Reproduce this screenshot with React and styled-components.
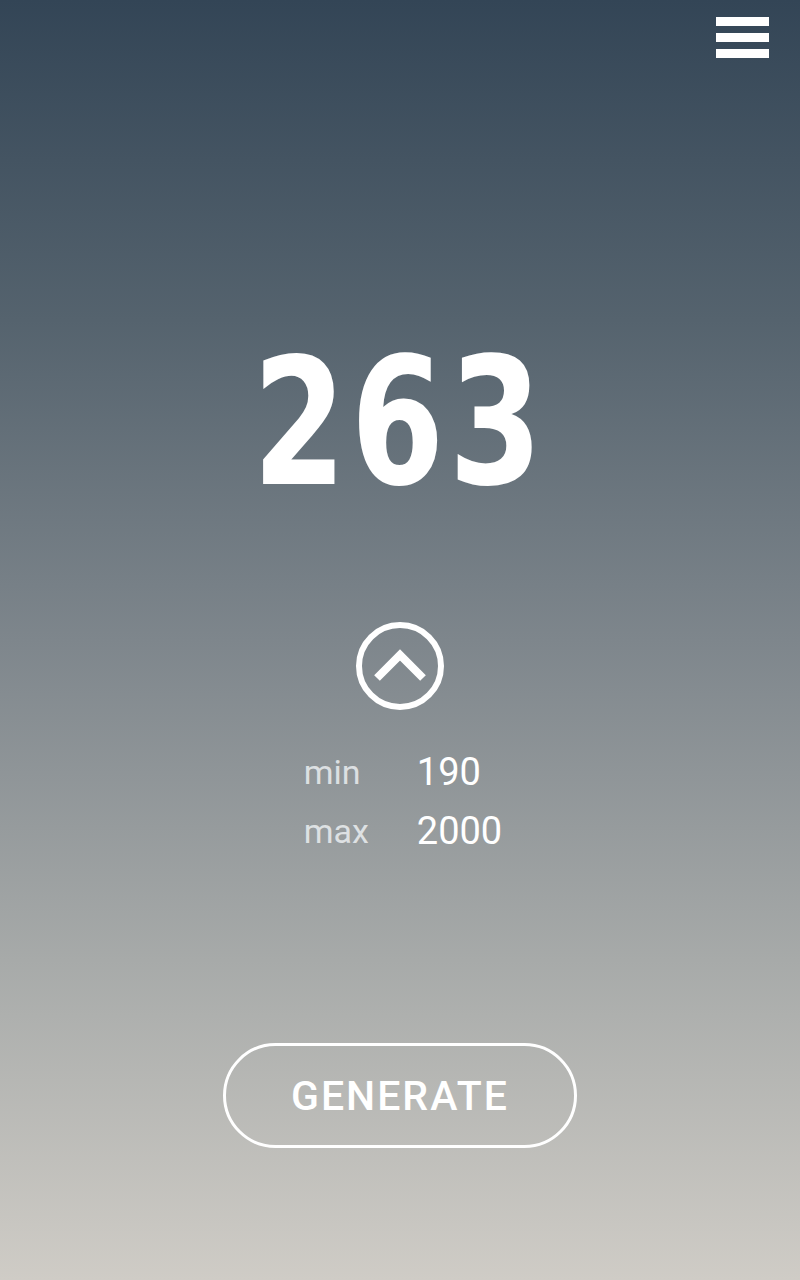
import React from "react";
import styled, { createGlobalStyle } from "styled-components";

const Global = createGlobalStyle`
  html, body { margin: 0; padding: 0; }
  body { font-family: Roboto, "Noto Sans", sans-serif; }
`;

const Screen = styled.div`
  width: 800px;
  height: 1280px;
  box-sizing: border-box;
  background: linear-gradient(180deg, #334556 0%, #55636e 25%, #7e868c 50%, #a7aaa9 75%, #cfccc6 100%);
  display: flex;
  flex-direction: column;
  align-items: center;
  overflow: hidden;
`;

const TopBar = styled.div`
  align-self: stretch;
  display: flex;
  justify-content: flex-end;
  padding: 17px 31px 0 0;
`;

const Menu = styled.button`
  display: flex;
  flex-direction: column;
  gap: 7px;
  width: 53px;
  padding: 0;
  background: none;
  border: none;
  cursor: pointer;
`;

const Bar = styled.span`
  display: block;
  height: 9px;
  background: #ffffff;
`;

const Number = styled.div`
  margin-top: 277px;
  font-family: "DejaVu Sans", sans-serif;
  font-weight: 700;
  font-size: 177px;
  line-height: 177px;
  height: 177px;
  color: #ffffff;
  letter-spacing: 6px;
  transform: scaleX(0.76);
`;

const ArrowButton = styled.button`
  margin-top: 109px;
  width: 90px;
  height: 90px;
  padding: 0;
  background: none;
  border: none;
  display: flex;
  align-items: center;
  justify-content: center;
`;

const Stats = styled.div`
  margin-top: 36px;
  display: grid;
  grid-template-columns: 113px auto;
  row-gap: 8px;
  margin-left: 6px;
`;

const Label = styled.span`
  font-family: Roboto, sans-serif;
  font-size: 34px;
  line-height: 51px;
  color: rgba(235, 238, 240, 0.85);
`;

const Value = styled.span`
  font-family: Roboto, sans-serif;
  font-size: 38px;
  line-height: 51px;
  color: #ffffff;
`;

const Generate = styled.button`
  margin-top: 186px;
  width: 354px;
  height: 105px;
  box-sizing: border-box;
  border: 3.5px solid #ffffff;
  border-radius: 53px;
  background: transparent;
  color: #ffffff;
  font-family: Roboto, sans-serif;
  font-weight: 500;
  font-size: 41px;
  letter-spacing: 2px;
  display: flex;
  align-items: center;
  justify-content: center;
  padding: 0;
`;

export default function App() {
  return (
    <>
      <Global />
      <Screen>
        <TopBar>
          <Menu aria-label="menu">
            <Bar />
            <Bar />
            <Bar />
          </Menu>
        </TopBar>
        <Number>263</Number>
        <ArrowButton aria-label="up">
          <svg width="90" height="90" viewBox="0 0 90 90">
            <circle cx="45" cy="45" r="41" fill="none" stroke="#fff" strokeWidth="6" />
            <polyline points="22,57 45,34 68,57" fill="none" stroke="#fff" strokeWidth="8" strokeLinejoin="miter" />
          </svg>
        </ArrowButton>
        <Stats>
          <Label>min</Label>
          <Value>190</Value>
          <Label>max</Label>
          <Value>2000</Value>
        </Stats>
        <Generate>GENERATE</Generate>
      </Screen>
    </>
  );
}
